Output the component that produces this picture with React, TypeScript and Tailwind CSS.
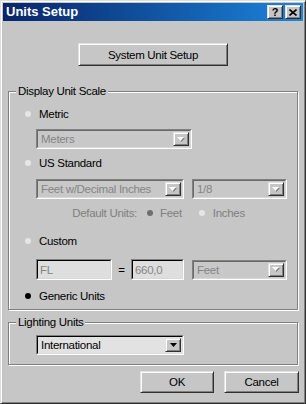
const F = "font-['Liberation_Sans',Arial,sans-serif]";

function Dot({ tone }: { tone: 'off' | 'on' | 'dim' }) {
  const c = tone === 'on' ? 'bg-black' : tone === 'dim' ? 'bg-[#6e6e6e]' : 'bg-[#e6e6e6]';
  return <span className={`block w-[6px] h-[6px] rounded-full ${c}`} />;
}

function Radio({ tone, label, dim }: { tone: 'off' | 'on' | 'dim'; label: string; dim?: boolean }) {
  return (
    <div className="h-[14px] flex items-center pl-[16px]">
      <Dot tone={tone} />
      <span className={`ml-[8px] ${dim ? 'text-[#808080]' : 'text-black'}`}>{label}</span>
    </div>
  );
}

function Arrow({ enabled }: { enabled?: boolean }) {
  return (
    <span className="w-[16px] h-full flex items-center justify-center bg-[#c6c6c6] border border-t-[#e2e2e2] border-l-[#e2e2e2] border-r-[#303030] border-b-[#303030] shadow-[inset_1px_1px_#ffffff,inset_-1px_-1px_#808080]">
      {enabled ? (
        <svg width="7" height="4" viewBox="0 0 7 4">
          <polygon points="0,0 7,0 3.5,4" fill="#000" />
        </svg>
      ) : (
        <svg width="8" height="5" viewBox="0 0 8 5">
          <polygon points="1,1 8,1 4.5,5" fill="#808080" />
          <polygon points="0,0 7,0 3.5,4" fill="#ffffff" />
        </svg>
      )}
    </span>
  );
}

function Select({ text, w, enabled }: { text: string; w: string; enabled?: boolean }) {
  return (
    <div className={`${w} h-[20px] border border-t-[#808080] border-l-[#808080] border-b-white border-r-white`}>
      <div
        className={`h-full flex items-center p-[1px] pl-[3px] border ${
          enabled
            ? 'border-t-black border-l-black border-b-[#dcdcdc] border-r-[#dcdcdc] bg-[#e2e2e2] text-black'
            : 'border-t-[#6a6a6a] border-l-[#6a6a6a] border-b-[#d8d8d8] border-r-[#d8d8d8] bg-[#c8c8c8] text-[#858585]'
        }`}
      >
        <span className="flex-1 whitespace-nowrap overflow-hidden">{text}</span>
        <Arrow enabled={enabled} />
      </div>
    </div>
  );
}

function Field({ text, w }: { text: string; w: string }) {
  return (
    <div className={`${w} h-[21px] border border-t-[#808080] border-l-[#808080] border-b-white border-r-white`}>
      <div className="h-full flex items-center pl-[2px] border border-t-black border-l-black border-b-[#d8d8d8] border-r-[#d8d8d8] bg-[#dedede] text-[#858585]">
        {text}
      </div>
    </div>
  );
}

function Button({ label, w, h }: { label: string; w: string; h: string }) {
  return (
    <div
      className={`${w} ${h} flex items-center justify-center border border-t-[#e2e2e2] border-l-[#e2e2e2] border-r-[#303030] border-b-[#303030] shadow-[inset_1px_1px_#ffffff,inset_-1px_-1px_#808080] text-black`}
    >
      {label}
    </div>
  );
}

function Group({ label, h, children }: { label: string; h: string; children: React.ReactNode }) {
  return (
    <div
      className={`relative ml-[5px] w-[290px] ${h} border border-[#808080] shadow-[inset_1px_1px_#ffffff,1px_1px_#ffffff]`}
    >
      <span className="absolute left-[7px] top-[-8px] px-[2px] bg-[#c6c6c6] leading-[14px]">{label}</span>
      {children}
    </div>
  );
}

export default function App() {
  return (
    <div
      className={`${F} text-[11.5px] tracking-[-0.3px] leading-[14px] w-[306px] h-[404px] bg-[#c6c6c6] border border-t-[#dfdfdf] border-l-[#dfdfdf] border-r-[#303030] border-b-[#303030] shadow-[inset_1px_1px_#ffffff,inset_-1px_-1px_#808080] p-[2px] overflow-hidden`}
    >
      <div className="h-[18px] flex items-center bg-gradient-to-r from-[#0a246a] to-[#1c86dc] pl-[3px] pr-[2px]">
        <span className="flex-1 text-white font-bold text-[13px] tracking-normal">Units Setup</span>
        <div className="flex gap-[2px]">
          <span className="w-[16px] h-[14px] flex items-center justify-center bg-[#c6c6c6] border border-t-[#e2e2e2] border-l-[#e2e2e2] border-r-[#303030] border-b-[#303030] shadow-[inset_1px_1px_#ffffff,inset_-1px_-1px_#808080] text-black font-bold text-[11px] tracking-normal">
            ?
          </span>
          <span className="w-[16px] h-[14px] flex items-center justify-center bg-[#c6c6c6] border border-t-[#e2e2e2] border-l-[#e2e2e2] border-r-[#303030] border-b-[#303030] shadow-[inset_1px_1px_#ffffff,inset_-1px_-1px_#808080]">
            <svg width="8" height="7" viewBox="0 0 8 7">
              <path d="M0.5 0.5 L7.5 6.5 M7.5 0.5 L0.5 6.5" stroke="#000" strokeWidth="1.6" />
            </svg>
          </span>
        </div>
      </div>

      <div className="mt-[22px] flex justify-center">
        <Button label="System Unit Setup" w="w-[150px]" h="h-[23px]" />
      </div>

      <div className="mt-[25px]">
        <Group label="Display Unit Scale" h="h-[219px]">
          <div className="flex flex-col pt-[15px]">
            <Radio tone="off" label="Metric" />
            <div className="mt-[8px] pl-[27px]">
              <Select text="Meters" w="w-[156px]" />
            </div>
            <div className="mt-[7px]">
              <Radio tone="off" label="US Standard" />
            </div>
            <div className="mt-[9px] pl-[27px] flex gap-[8px]">
              <Select text="Feet w/Decimal Inches" w="w-[148px]" />
              <Select text="1/8" w="w-[95px]" />
            </div>
            <div className="mt-[7px] h-[14px] flex items-center text-[#808080]">
              <span className="w-[128px] text-right">Default Units:</span>
              <span className="ml-[10px]">
                <Dot tone="dim" />
              </span>
              <span className="ml-[7px]">Feet</span>
              <span className="ml-[17px]">
                <Dot tone="off" />
              </span>
              <span className="ml-[8px]">Inches</span>
            </div>
            <div className="mt-[14px]">
              <Radio tone="off" label="Custom" />
            </div>
            <div className="mt-[11px] pl-[27px] flex items-center">
              <Field text="FL" w="w-[76px]" />
              <span className="w-[19px] text-center">=</span>
              <Field text="660,0" w="w-[53px]" />
              <div className="ml-[8px]">
                <Select text="Feet" w="w-[95px]" />
              </div>
            </div>
            <div className="mt-[9px]">
              <Radio tone="on" label="Generic Units" />
            </div>
          </div>
        </Group>
      </div>

      <div className="mt-[12px]">
        <Group label="Lighting Units" h="h-[43px]">
          <div className="pt-[12px] pl-[27px]">
            <Select text="International" w="w-[148px]" enabled />
          </div>
        </Group>
      </div>

      <div className="mt-[6px] flex justify-end gap-[10px] pr-[4px]">
        <Button label="OK" w="w-[74px]" h="h-[22px]" />
        <Button label="Cancel" w="w-[75px]" h="h-[22px]" />
      </div>
    </div>
  );
}
